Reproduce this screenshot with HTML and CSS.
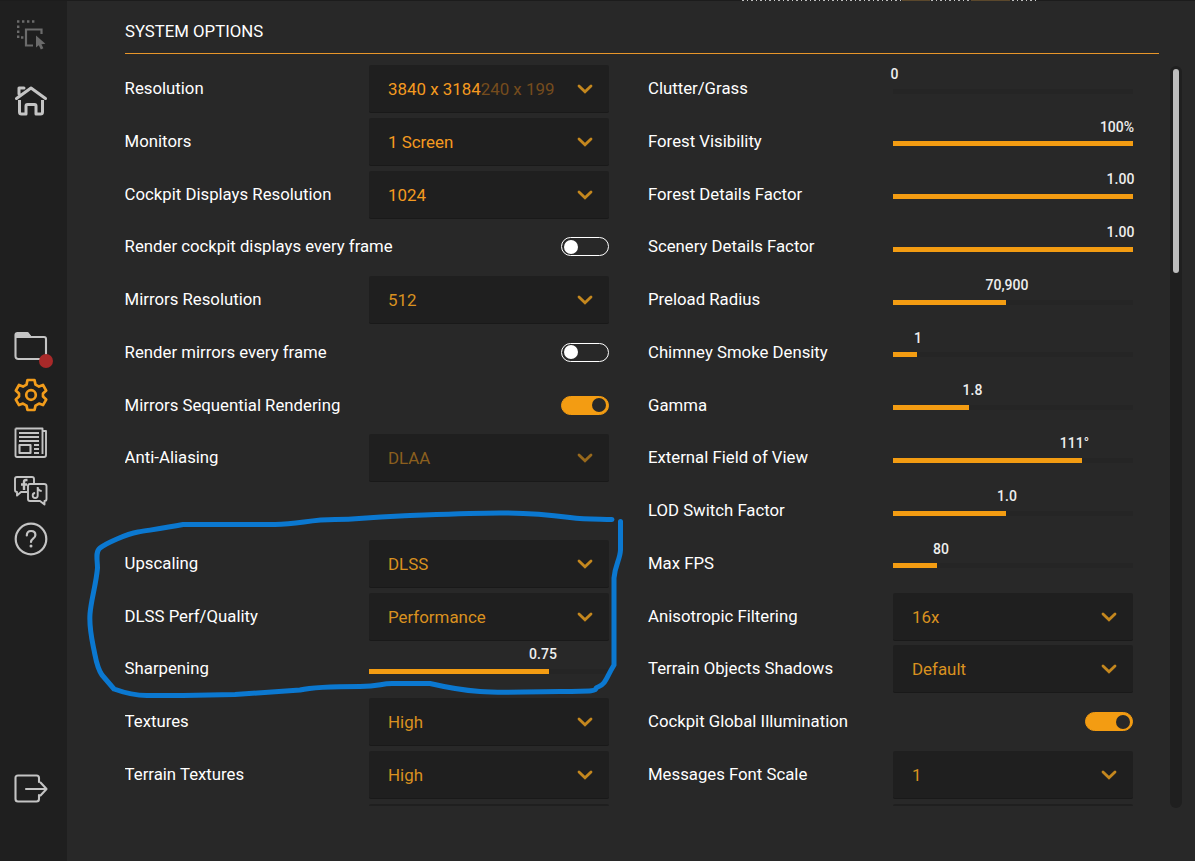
FILE: index.html
```html
<!DOCTYPE html>
<html lang="en">
<head>
<meta charset="utf-8">
<title>System Options</title>
<link rel="stylesheet" href="styles.css">
</head>
<body>
<svg class="defs" width="0" height="0">
  <symbol id="chev" viewBox="0 0 16 10"><path d="M2 2l6 5.8L14 2" fill="none" stroke="currentColor" stroke-width="2.8" stroke-linecap="round"/></symbol>
</svg>
<div class="backdrop-edge"></div>
<div class="app">
  <nav class="sidebar">
    <svg class="icon pick dim" viewBox="0 0 34 34"><path d="M3 4.500h19M4.200 8.500v14M7 20.500h3" stroke-width="2.4" stroke-dasharray="2.400 2.600"/><path d="M27.500 17V12.500H12v16h7" stroke-width="2.200"/><path d="M22 18.500v12l2.800-2.200 2 4.200 2.600-1.200-2-4 4-.5z" fill="currentColor" stroke="none"/></svg>
    <svg class="icon home" viewBox="0 0 34 34"><path d="M2.500 14.500L17 4 31.500 14.500M5 10V4h5" stroke-width="3" stroke-linecap="round"/><path d="M5.500 16V28q0 2 2 2h4.500v-8q0-1.500 1.500-1.500h7q1.500 0 1.500 1.500v8h4.500q2 0 2-2V16" stroke-width="3"/></svg>
    <span class="folder"><svg class="icon" viewBox="0 0 34 34"><path d="M1.500 7V5q0-2 2-2h10l3 4H30q2 0 2 2v17q0 3-3 3H4.500q-3 0-3-3z"/><path d="M2 7V4h11.500l3 3z" fill="currentColor"/></svg><i class="alert"></i></span>
    <svg class="icon gear" viewBox="0 0 34 34"><path d="M13.500 2h7l1 4.600 3.500 2 4-1.600 3.200 5.600-3.200 3v3l3.200 3-3.200 5.500-4-1.500-3.500 2-1 4.400h-7l-1-4.400-3.500-2-4 1.500-3.200-5.500 3.200-3v-3l-3.200-3L5 7l4 1.600 3.500-2z" stroke-width="2.700" stroke-linejoin="round"/><circle cx="17" cy="17" r="4.800" stroke-width="2.700"/></svg>
    <svg class="icon news" viewBox="0 0 34 34"><path d="M1.500 2.500h27V28M28.500 5H32v24q0 2-2 2H3q-1.500 0-1.500-1.500V2.500M5 7h20M5 11h20M5 15h20M20 19h5M20 23h5M20 27h5" stroke-width="1.900"/><path d="M5.500 19h11v8h-11z"/></svg>
    <svg class="icon social" viewBox="0 0 34 34"><path d="M13 18H7l-4 3.500V18q-2 0-2-2V5q0-2 2-2h15q2 0 2 2v4M16 10h14q2.500 0 2.500 2v13q0 2-2 2v3.500L26 27H16q-2 0-2-2V12q0-2 2-2z" stroke-width="1.900"/><path d="M13.500 6h-1.500q-2 0-2 2v8M7 10.500H13" stroke-width="2.400"/><path d="M23.700 13v8.500a2.500 2.500 0 1 1-2.600-2.500M23.700 13q0 3.500 4 4" stroke-width="1.900"/></svg>
    <svg class="icon help" viewBox="0 0 34 34"><circle cx="17" cy="17" r="15.300" stroke-width="2.200"/><path d="M12.800 13.500q0-4.500 4.300-4.500t4.300 4q0 2-2.300 3.700-2.100 1.600-2.100 3.300" stroke-width="2.200" stroke-linecap="round"/><circle cx="17" cy="24" r="1.500" fill="currentColor" stroke="none"/></svg>
    <svg class="icon exit" viewBox="0 0 34 34"><path d="M25 10V6q0-2.500-2.500-2.500H4q-2.500 0-2.500 2.500v21q0 2.500 2.500 2.500h18.500q2.500 0 2.500-2.500v-4" stroke-linecap="round"/><path d="M12 17h20M26.500 10.500l6 6.500-6 6.500" stroke-linecap="round"/></svg>
  </nav>
  <main class="panel">
    <h1 class="title">SYSTEM OPTIONS</h1>
    <div class="body">
      <div class="options">
        <section class="column">
          <div class="row"><label>Resolution</label><div class="select bright"><span>3840 x 3184<em>240 x 199</em></span><svg class="chev"><use href="#chev"/></svg></div></div>
          <div class="row"><label>Monitors</label><div class="select bright"><span>1 Screen</span><svg class="chev"><use href="#chev"/></svg></div></div>
          <div class="row"><label>Cockpit Displays Resolution</label><div class="select bright"><span>1024</span><svg class="chev"><use href="#chev"/></svg></div></div>
          <div class="row"><label>Render cockpit displays every frame</label><div class="toggle"></div></div>
          <div class="row"><label>Mirrors Resolution</label><div class="select"><span>512</span><svg class="chev"><use href="#chev"/></svg></div></div>
          <div class="row"><label>Render mirrors every frame</label><div class="toggle"></div></div>
          <div class="row"><label>Mirrors Sequential Rendering</label><div class="toggle on"></div></div>
          <div class="row"><label>Anti-Aliasing</label><div class="select disabled"><span>DLAA</span><svg class="chev"><use href="#chev"/></svg></div></div>
          <div class="row"></div>
          <div class="row"><label>Upscaling</label><div class="select"><span>DLSS</span><svg class="chev"><use href="#chev"/></svg></div></div>
          <div class="row"><label>DLSS Perf/Quality</label><div class="select"><span>Performance</span><svg class="chev"><use href="#chev"/></svg></div></div>
          <div class="row"><label>Sharpening</label><div class="slider" style="--fill:180px;--at:174px"><output>0.75</output></div></div>
          <div class="row"><label>Textures</label><div class="select"><span>High</span><svg class="chev"><use href="#chev"/></svg></div></div>
          <div class="row"><label>Terrain Textures</label><div class="select"><span>High</span><svg class="chev"><use href="#chev"/></svg></div></div>
          <div class="row"><div class="select"></div></div>
        </section>
        <section class="column">
          <div class="row"><label>Clutter/Grass</label><div class="slider" style="--fill:0px;--at:1.5px"><output>0</output></div></div>
          <div class="row"><label>Forest Visibility</label><div class="slider" style="--fill:240px;--at:224px"><output>100%</output></div></div>
          <div class="row"><label>Forest Details Factor</label><div class="slider" style="--fill:240px;--at:227.5px"><output>1.00</output></div></div>
          <div class="row"><label>Scenery Details Factor</label><div class="slider" style="--fill:240px;--at:227.5px"><output>1.00</output></div></div>
          <div class="row"><label>Preload Radius</label><div class="slider" style="--fill:113px;--at:114px"><output>70,900</output></div></div>
          <div class="row"><label>Chimney Smoke Density</label><div class="slider" style="--fill:24px;--at:25px"><output>1</output></div></div>
          <div class="row"><label>Gamma</label><div class="slider" style="--fill:76px;--at:79.5px"><output>1.8</output></div></div>
          <div class="row"><label>External Field of View</label><div class="slider" style="--fill:189px;--at:181.5px"><output>111°</output></div></div>
          <div class="row"><label>LOD Switch Factor</label><div class="slider" style="--fill:113px;--at:114px"><output>1.0</output></div></div>
          <div class="row"><label>Max FPS</label><div class="slider" style="--fill:44px;--at:48px"><output>80</output></div></div>
          <div class="row"><label>Anisotropic Filtering</label><div class="select"><span>16x</span><svg class="chev"><use href="#chev"/></svg></div></div>
          <div class="row"><label>Terrain Objects Shadows</label><div class="select"><span>Default</span><svg class="chev"><use href="#chev"/></svg></div></div>
          <div class="row"><label>Cockpit Global Illumination</label><div class="toggle on"></div></div>
          <div class="row"><label>Messages Font Scale</label><div class="select"><span>1</span><svg class="chev"><use href="#chev"/></svg></div></div>
          <div class="row"><div class="select"></div></div>
        </section>
      </div>
      <div class="scrollbar"><div class="thumb"></div></div>
    </div>
  </main>
</div>
<svg class="marker" viewBox="0 0 1195 861"><path d="M612 519.500C598 519 586 519.500 570 517.500S530 513 500 513 440 514.500 400 516 360 519.500 335 519.500 300 524 275 524.500H183C165 528 150 530 138 532S105 544 100 548 97.500 560 97.500 568C96 585 91 600 90 614S92 640 94 650 97 668 102 675L114 689C125 693 135 695.500 147 695.500H183L235 694.500 300 690C315 686.500 340 686.500 360 686.500S380 683.500 392 683.500H430C445 687 460 690 480 691.500S510 692 560 691.500 590 690 598 687 606 678 614 665V578C615 565 620 560 620.500 550V521.500"/></svg>
</body>
</html>
```
FILE: styles.css
```css
* { box-sizing: border-box; }
body {
  margin: 0;
  background: #282828;
  color: #fff;
  font: 16.76px Roboto, "Liberation Sans", sans-serif;
  overflow: hidden;
}
.defs { position: absolute; }
.app { display: flex; width: 1195px; height: 861px; border-top: 1px solid #1c1c1c; }
.backdrop-edge {
  position: absolute;
  top: 0;
  left: 742px;
  width: 294px;
  height: 1px;
  background:
    linear-gradient(90deg, transparent 160px, #5b482c 160px 188px, transparent 188px 229px, #5b482c 229px 268px, transparent 268px),
    repeating-linear-gradient(90deg, #bbb 0 2px, #222 2px 5px, #ccc 5px 6px, #222 6px 9px);
}

.sidebar {
  flex: none;
  width: 67px;
  padding: 16px 0 0 14px;
  background: #1f1f1f;
  color: #c4c4c4;
  display: flex;
  flex-direction: column;
}
.icon { display: block; width: 34px; height: 34px; fill: none; stroke: currentColor; stroke-width: 2.1; stroke-linejoin: round; }
.dim { color: #6b6b6b; }
.pick { stroke-linejoin: miter; }
.home { margin-top: 33px; }
.folder { position: relative; margin-top: 212px; }
.alert { position: absolute; left: 25px; top: 24px; width: 14px; height: 14px; border-radius: 50%; background: #a82929; }
.gear { margin-top: 14px; color: #f29c1b; }
.news, .social, .help { margin-top: 14px; }
.exit { margin-top: 216px; }

.panel { flex: 1; padding-left: 57.6px; }
.title {
  width: 1034px;
  height: 53px;
  margin: 0 0 0 .4px;
  padding-top: 20px;
  border-bottom: 1px solid #e8962a;
  font-size: 16.76px;
  line-height: 20px;
  font-weight: 400;
}
.body { display: flex; padding-top: 8.7px; }
.options { display: flex; gap: 39px; width: 1045.4px; height: 743.7px; overflow: hidden; }
.column { width: 484.4px; flex: none; }
.column + .column { width: 485px; }
.row { display: flex; align-items: center; justify-content: space-between; height: 52.77px; }
.row label { white-space: nowrap; line-height: 20px; padding-bottom: 2px; }
.row > :only-child { margin-left: auto; }

.select {
  display: flex;
  align-items: center;
  justify-content: space-between;
  width: 240px;
  height: 48px;
  padding: 1px 16px 0 19px;
  border-bottom: 1px solid #191919;
  border-radius: 2px;
  background: #1f1f1f;
  color: #d9911f;
  font-size: 16.9px;
}
.select.bright { color: #f49a20; }
.select em { font-style: normal; color: #754c1d; }
.select.disabled { color: #8b5f1e; }
.chev { width: 16px; height: 10px; color: #c4871e; }
.disabled .chev { color: #98691c; }

.toggle { width: 48px; height: 19px; padding: 2px; border: 1px solid #fff; border-radius: 10px; margin-top: -1px; }
.toggle::before { content: ""; display: block; width: 14px; height: 14px; border-radius: 50%; background: #fff; margin-top: -.5px; }
.toggle.on { background: #f39c12; border-color: #f39c12; }
.toggle.on::before { margin-left: 28px; background: #282828; }

.slider { position: relative; width: 240px; height: 5px; margin-top: 4px; background: linear-gradient(#f39c12, #f39c12) 0 0 / var(--fill) 100% no-repeat #252525; }
.slider output {
  position: absolute;
  left: var(--at);
  bottom: 11.7px;
  transform: translateX(-50%);
  font-size: 14px;
  line-height: 16px;
  font-weight: 500;
  color: #eee;
}

.scrollbar { width: 12px; height: 742px; margin-top: 3px; padding: 3px; border-radius: 6px; background: #1f1f1f; }
.thumb { height: 204px; border-radius: 3px; background: #bdbdbd; }

.marker { position: absolute; left: 0; top: 0; width: 1195px; height: 861px; pointer-events: none; fill: none; stroke: #0b78d0; stroke-width: 5; stroke-linecap: round; stroke-linejoin: round; }
```
